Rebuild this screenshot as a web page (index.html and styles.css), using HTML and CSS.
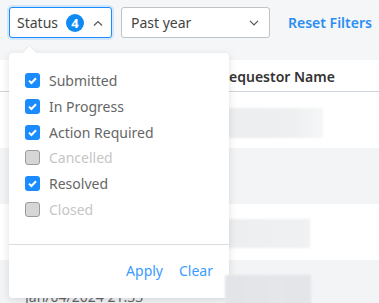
FILE: index.html
```html
<!DOCTYPE html>
<html lang="en">
<head>
  <meta charset="UTF-8">
  <meta name="viewport" content="width=device-width, initial-scale=1.0">
  <title>Requests</title>
  <link rel="stylesheet" href="styles.css">
</head>
<body>
  <div class="toolbar">
    <button class="filter filter-open" type="button">
      <span>Status</span>
      <span class="badge">4</span>
      <svg class="chev" viewBox="0 0 10 6" width="10" height="6"><path d="M1 5.5 5 1.5 9 5.5"/></svg>
    </button>
    <button class="filter select" type="button">
      <span>Past year</span>
      <svg class="chev" viewBox="0 0 10 6" width="10" height="6"><path d="M1 .8 5 4.8 9 .8"/></svg>
    </button>
    <a class="reset" href="#">Reset Filters</a>
  </div>

  <div class="table">
    <div class="row head">
      <div class="cell"></div>
      <div class="cell">Requestor Name</div>
    </div>
    <div class="row">
      <div class="cell"></div>
      <div class="cell"><div class="blur wide"></div></div>
    </div>
    <div class="row alt">
      <div class="cell"></div>
      <div class="cell"></div>
    </div>
    <div class="row">
      <div class="cell"></div>
      <div class="cell"><div class="blur"></div></div>
    </div>
    <div class="row alt">
      <div class="cell date">Jan/04/2024 21:33</div>
      <div class="cell"><div class="blur dark"></div></div>
    </div>
  </div>

  <div class="dropdown">
    <span class="caret"></span>
    <ul class="options">
      <li class="checked">Submitted</li>
      <li class="checked">In Progress</li>
      <li class="checked">Action Required</li>
      <li class="disabled">Cancelled</li>
      <li class="checked">Resolved</li>
      <li class="disabled">Closed</li>
    </ul>
    <div class="actions">
      <a href="#">Apply</a>
      <a href="#">Clear</a>
    </div>
  </div>
</body>
</html>
```

FILE: styles.css
```css
body {
  margin: 0;
  background: #f5f6f8;
  font-family: "Noto Sans", "Open Sans", sans-serif;
  font-size: 14px;
  color: #333;
  overflow: hidden;
}

/* --- Barra filtri --- */
.toolbar {
  display: flex;
  align-items: center;
  gap: 9px;
  padding: 7px 9px 0 9px;
}

.filter {
  display: flex;
  align-items: center;
  flex-shrink: 0;
  height: 31px;
  box-sizing: border-box;
  background: #fff;
  border: 1px solid #bfc2c6;
  border-radius: 3px;
  padding: 0 8px 0 7px;
  font-family: inherit;
  font-size: 14px;
  color: #444;
}

.filter-open {
  width: 103px;
  border-color: #1a8cff;
  box-shadow: 0 0 0 2px rgba(26, 140, 255, 0.15);
}

.badge {
  display: inline-flex;
  align-items: center;
  justify-content: center;
  width: 18px;
  height: 18px;
  margin-left: 8px;
  border-radius: 50%;
  background: #0d8bf2;
  color: #fff;
  font-weight: 700;
  font-size: 13px;
}

.chev {
  margin-left: auto;
  fill: none;
  stroke: #555;
  stroke-width: 1.2;
}

.select {
  width: 149px;
  padding-left: 9px;
  padding-right: 10px;
}

.reset {
  margin-left: 9px;
  white-space: nowrap;
  flex-shrink: 0;
  color: #2b8ef2;
  font-weight: 600;
  text-decoration: none;
}

/* --- Tabella --- */
.table {
  margin-top: 22px;
}

.row {
  display: grid;
  grid-template-columns: 220px 1fr;
  height: 56px;
}

.row.alt { background: #f3f4f6; }

.row.head {
  height: 31px;
  border-bottom: 1px solid #cfd5dc;
  background: #fff;
  font-weight: 600;
  align-items: center;
}

.row.head .cell { padding-top: 1px; }

.row:not(.head):not(.alt) { background: #fff; }

.cell { position: relative; }

.blur {
  position: absolute;
  top: 15px;
  left: 8px;
  width: 82px;
  height: 29px;
  background: linear-gradient(90deg, #eceef0, #eef0f1 60%, #eff1f2);
  filter: blur(1px);
}

.blur.wide { width: 95px; top: 16px; height: 30px; background: linear-gradient(90deg, #eceef0, #eeeff0 70%, #f6f7f8); }

.blur.dark {
  left: 5px;
  width: 86px;
  height: 30px;
  background: linear-gradient(90deg, #e2e4e7, #e4e6e9 60%, #e3e5e8);
  z-index: 5;
}

.date {
  padding: 27px 0 0 25px;
  white-space: nowrap;
  color: #666;
}

/* --- Menu a tendina --- */
.dropdown {
  position: absolute;
  left: 9px;
  top: 53px;
  width: 220px;
  height: 245px;
  background: #fff;
  border-radius: 4px;
  box-shadow: 0 2px 8px rgba(0, 0, 0, 0.12);
  z-index: 2;
}

.caret {
  position: absolute;
  top: -5px;
  left: 16px;
  width: 9px;
  height: 9px;
  background: #fff;
  transform: rotate(45deg);
  box-shadow: -1px -1px 2px rgba(0, 0, 0, 0.04);
}

.options {
  list-style: none;
  margin: 0;
  padding: 15px 0 0 0;
  height: 176px;
  border-bottom: 1px solid #dcdcdc;
}

.options li {
  display: flex;
  align-items: center;
  height: 25.7px;
  padding-left: 16px;
  color: #666;
}

.options li::before {
  content: "";
  width: 15px;
  height: 15px;
  margin-right: 9px;
  box-sizing: border-box;
  border-radius: 3px;
  border: 1px solid #9b9b9b;
  background: #d6d6d6;
}

.options li.checked::before {
  border: none;
  background: #1a8cff url("data:image/svg+xml,%3Csvg xmlns='http://www.w3.org/2000/svg' viewBox='0 0 15 15'%3E%3Cpath d='M4 7.6 6.4 10 11 5.2' fill='none' stroke='%23fff' stroke-width='2'/%3E%3C/svg%3E") center / 15px 15px no-repeat;
}

.options li.disabled { color: #c6c6c6; }

.actions {
  display: flex;
  justify-content: flex-end;
  gap: 16px;
  padding: 16px 16px 0 0;
}

.actions a {
  color: #3a9bff;
  text-decoration: none;
}
```
